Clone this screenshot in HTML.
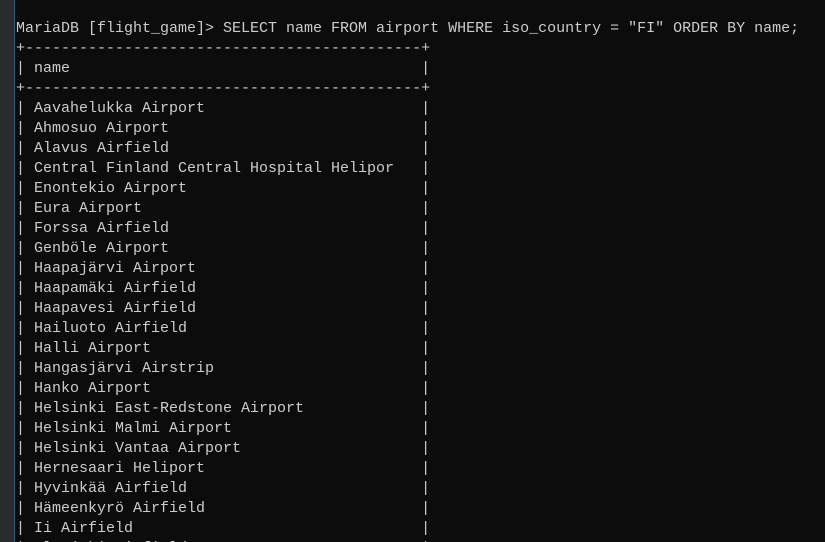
<!DOCTYPE html>
<html><head><meta charset="utf-8"><style>
html,body{margin:0;padding:0;width:825px;height:542px;overflow:hidden;background:#0c0c0c;position:relative;}
.strip{position:absolute;left:0;top:0;width:14px;height:542px;background:#2b2b2b;}
.line{position:absolute;left:14px;top:0;width:1px;height:542px;background:#2a5d82;}
pre{position:absolute;left:16px;top:19px;margin:0;font-family:"Liberation Mono",monospace;font-size:15px;line-height:20px;color:#cccccc;white-space:pre;}
</style></head><body>
<div class="strip"></div><div class="line"></div>
<pre>MariaDB [flight_game]&gt; SELECT name FROM airport WHERE iso_country = "FI" ORDER BY name;
+--------------------------------------------+
| name                                       |
+--------------------------------------------+
| Aavahelukka Airport                        |
| Ahmosuo Airport                            |
| Alavus Airfield                            |
| Central Finland Central Hospital Helipor   |
| Enontekio Airport                          |
| Eura Airport                               |
| Forssa Airfield                            |
| Genböle Airport                            |
| Haapajärvi Airport                         |
| Haapamäki Airfield                         |
| Haapavesi Airfield                         |
| Hailuoto Airfield                          |
| Halli Airport                              |
| Hangasjärvi Airstrip                       |
| Hanko Airport                              |
| Helsinki East-Redstone Airport             |
| Helsinki Malmi Airport                     |
| Helsinki Vantaa Airport                    |
| Hernesaari Heliport                        |
| Hyvinkää Airfield                          |
| Hämeenkyrö Airfield                        |
| Ii Airfield                                |
| Ilmajoki Airfield                          |
</pre>
</body></html>
